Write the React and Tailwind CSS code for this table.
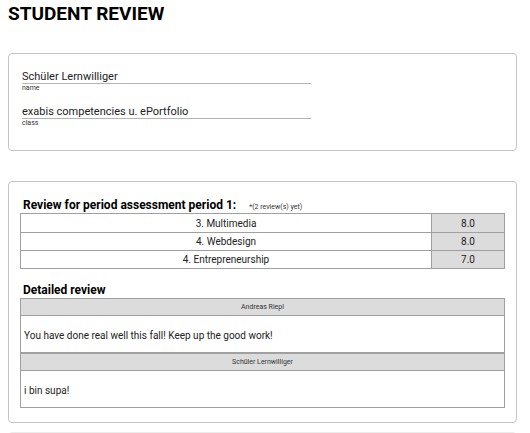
const rows = [
  ["3. Multimedia", "8.0", "h-[18px]"],
  ["4. Webdesign", "8.0", "h-[18px] border-t border-[#a0a0a0]"],
  ["4. Entrepreneurship", "7.0", "h-[18px] border-t border-[#a0a0a0]"],
];

const reviews = [
  ["Andreas Riepl", "You have done real well this fall! Keep up the good work!", ""],
  ["Schüler Lernwilliger", "i bin supa!", "border-t-2 border-[#a0a0a0]"],
];

function Field({ value, label, className }) {
  return (
    <div className={className}>
      <div className="h-[15px] border-b border-[#b4b4b4] pt-[1px] text-[11px] leading-[14px] text-[#222]">{value}</div>
      <div className="h-[8px] text-[7px] leading-[8px] text-[#333]">{label}</div>
    </div>
  );
}

export default function App() {
  return (
    <div className="w-[530px] h-[433px] overflow-hidden bg-white text-[#222] pl-2 font-[Roboto]">
      <h1 className="pt-[2px] text-[19px] leading-[24px] font-bold text-black">STUDENT REVIEW</h1>

      <section className="mt-[27px] w-[509px] h-[98px] border border-[#c4c4c4] rounded-[4px] pl-[13px] pt-[15px]">
        <div className="w-[289px]">
          <Field value="Schüler Lernwilliger" label="name" />
          <Field value="exabis competencies u. ePortfolio" label="class" className="mt-[12px]" />
        </div>
      </section>

      <section className="mt-[30px] w-[509px] h-[242px] border border-[#c4c4c4] rounded-[4px] px-[11px] pt-[15px]">
        <div className="flex items-baseline pl-[3px]">
          <h2 className="text-[12px] leading-[16px] font-bold text-black">Review for period assessment period 1:</h2>
          <span className="ml-[13px] text-[7px] leading-[8px] text-[#333]">*(2 review(s) yet)</span>
        </div>
        <div className="border border-[#a0a0a0]">
          {rows.map(([name, score, cls]) => (
            <div key={name} className={"flex " + cls}>
              <div className="flex-1 flex items-center justify-center text-[10px] text-[#222]">{name}</div>
              <div className="w-[73px] border-l border-[#a0a0a0] bg-[#dcdcdc] flex items-center justify-center text-[10px] text-[#222]">{score}</div>
            </div>
          ))}
        </div>

        <h2 className="mt-[14px] pl-[3px] text-[12px] leading-[15px] font-bold text-black">Detailed review</h2>
        <div className="border border-[#a0a0a0]">
          {reviews.map(([author, text, cls]) => (
            <div key={author} className={cls}>
              <div className="h-[17px] bg-[#dcdcdc] border-b border-[#a0a0a0] flex items-center justify-center text-[7px] text-[#333]">{author}</div>
              <div className="h-[36px] pt-[14px] pl-[3px] text-[10px] leading-[12px] text-[#222]">{text}</div>
            </div>
          ))}
        </div>
      </section>

      <section className="mt-[9px] w-[509px] h-[40px] border border-[#ececec] rounded-[4px]"></section>
    </div>
  );
}
